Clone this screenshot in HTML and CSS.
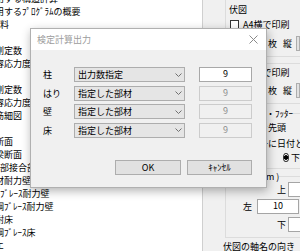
FILE: index.html
```html
<!DOCTYPE html>
<html lang="ja">
<head>
<meta charset="UTF-8">
<title>検定計算出力</title>
<link rel="stylesheet" href="styles.css">
</head>
<body>
<div class="app">
    <div class="tree">
        <div class="tree-list">
            <div class="item">用する構造計算</div>
            <div class="item">用するﾌﾟﾛｸﾞﾗﾑの概要</div>
            <div class="item full">料</div>
            <div class="item"></div>
            <div class="item">剛定数</div>
            <div class="item">容応力度</div>
            <div class="item"></div>
            <div class="item">剛定数</div>
            <div class="item">容応力度</div>
            <div class="item">筋細図</div>
            <div class="item"></div>
            <div class="item">断面</div>
            <div class="item">梁断面</div>
            <div class="item full">部接合部</div>
            <div class="item">材耐力壁</div>
            <div class="item full">ﾌﾞﾚｰｽ耐力壁</div>
            <div class="item">鋼ﾌﾞﾚｰｽ耐力壁</div>
            <div class="item">耐床</div>
            <div class="item">鋼ﾌﾞﾚｰｽ床</div>
            <div class="item">エ</div>
        </div>
    </div>

    <div class="side">
        <div class="grp g1">
            <div class="line cap">伏図</div>
            <div class="line chk-row"><span class="chk"></span><span class="chk-text">A4横で印刷</span></div>
            <div class="line cnt-row"><span>1</span><span class="mai">枚</span><span class="tate">縦</span><span class="spin"></span></div>
        </div>
        <div class="grp g2">
            <div class="line chk-row"><span class="chk"></span><span class="chk-text">A4横で印刷</span></div>
            <div class="line cnt-row"><span>1</span><span class="mai">枚</span><span class="tate">縦</span><span class="spin"></span></div>
        </div>
        <fieldset class="fs g3">
            <legend class="hf">ﾍｯﾀﾞｰ・ﾌｯﾀｰ</legend>
            <div class="line head-row">日時を先頭</div>
            <div class="line date-row">ﾍｯﾀﾞｰに日付と時刻</div>
            <div class="line radio-row"><span class="radio"></span><span>下</span></div>
        </fieldset>
        <fieldset class="fs g4">
            <legend class="mg">余白 ( mm )</legend>
            <div class="mrow top"><span>上</span><span class="box"></span></div>
            <div class="mrow left"><span>左</span><span class="box wide">10</span></div>
            <div class="mrow bottom"><span>下</span><span class="box"></span></div>
        </fieldset>
        <div class="line axis">伏図の軸名の向き</div>
    </div>
</div>

<div class="dialog">
    <div class="dlg-title">
        <span>検定計算出力</span>
        <svg class="dlg-close" width="9" height="9" viewBox="0 0 9 9"><path d="M0.5 0.5 L8.5 8.5 M8.5 0.5 L0.5 8.5" stroke="#8a8a8a" stroke-width="1" fill="none"/></svg>
    </div>
    <div class="dlg-body">
        <div class="out-grid">
            <span class="lbl">柱</span>
            <div class="combo"><span>出力数指定</span><svg width="7" height="4" viewBox="0 0 7 4"><path d="M0.5 0.5 L3.5 3.5 L6.5 0.5" stroke="#707070" fill="none"/></svg></div>
            <div class="num">9</div>

            <span class="lbl">はり</span>
            <div class="combo"><span>指定した部材</span><svg width="7" height="4" viewBox="0 0 7 4"><path d="M0.5 0.5 L3.5 3.5 L6.5 0.5" stroke="#707070" fill="none"/></svg></div>
            <div class="num off">9</div>

            <span class="lbl">壁</span>
            <div class="combo"><span>指定した部材</span><svg width="7" height="4" viewBox="0 0 7 4"><path d="M0.5 0.5 L3.5 3.5 L6.5 0.5" stroke="#707070" fill="none"/></svg></div>
            <div class="num off">9</div>

            <span class="lbl">床</span>
            <div class="combo"><span>指定した部材</span><svg width="7" height="4" viewBox="0 0 7 4"><path d="M0.5 0.5 L3.5 3.5 L6.5 0.5" stroke="#707070" fill="none"/></svg></div>
            <div class="num off">9</div>
        </div>
        <div class="btns">
            <button type="button" class="btn ok">OK</button>
            <button type="button" class="btn cancel">ｷｬﾝｾﾙ</button>
        </div>
    </div>
</div>
</body>
</html>
```

FILE: styles.css
```css
  body {
      margin: 0;
      width: 300px;
      height: 251px;
      overflow: hidden;
      font-family: 'Noto Sans CJK JP', sans-serif;
      font-size: 9px;
      color: #000;
      background: #f0f0f0;
  }
  .app {
      display: flex;
      height: 251px;
  }

  /* tree on the left, scrolled sideways */
  .tree {
      width: 203px;
      flex-shrink: 0;
      background: #fff;
      border-right: 1px solid #cfcfcf;
      box-sizing: border-box;
      overflow: hidden;
  }
  .tree-list {
      margin-top: -8.5px;
      margin-left: -5px;
  }
  .item {
      height: 13px;
      line-height: 13px;
      white-space: nowrap;
  }
  .item.full {
      padding-left: 5px;
  }

  /* settings panel on the right */
  .side {
      flex: 1;
      padding-left: 22px;
      white-space: nowrap;
      overflow: hidden;
  }
  .line {
      height: 13px;
      line-height: 13px;
  }
  .grp {
      border: 1px solid #dcdcdc;
      border-right: none;
      padding-left: 3px;
      box-sizing: border-box;
  }
  .g1 {
      margin-top: -5px;
      height: 62px;
  }
  .g1 .cap {
      margin-top: 7px;
  }
  .g1 .chk-row {
      margin-top: 2px;
  }
  .g2 {
      margin-top: 6px;
      height: 41px;
  }
  .g2 .chk-row {
      margin-top: 1.5px;
  }
  .chk-row {
      display: flex;
      align-items: center;
  }
  .chk {
      width: 9px;
      height: 9px;
      margin-left: 1px;
      border: 1px solid #333;
      background: #fff;
      box-sizing: border-box;
  }
  .chk-text {
      margin-left: 4px;
  }
  .cnt-row {
      display: flex;
      align-items: center;
      margin-top: 5px;
      padding-left: 30px;
  }
  .g1 .cnt-row {
      margin-top: 5.5px;
  }
  .mai {
      margin-left: 4px;
  }
  .tate {
      margin-left: 6px;
  }
  .spin {
      width: 30px;
      height: 15px;
      margin-left: 4px;
      border: 1px solid #adadad;
      background: #e1e1e1;
      box-sizing: border-box;
  }

  .fs {
      margin: 0;
      border: 1px solid #dcdcdc;
      border-right: none;
      padding: 0 0 0 3px;
      min-width: 0;
  }
  .fs legend {
      padding: 0;
      line-height: 13px;
  }
  .g3 {
      margin-top: 2.5px;
      height: 62px;
      box-sizing: border-box;
  }
  .hf {
      margin-left: 14.5px;
  }
  .head-row {
      margin-top: 1px;
      padding-left: 12px;
  }
  .date-row {
      margin-top: 3px;
      padding-left: 16.5px;
  }
  .radio-row {
      margin-top: 1px;
      padding-left: 54px;
      display: flex;
      align-items: center;
      gap: 2px;
  }
  .radio {
      width: 9px;
      height: 9px;
      border: 1px solid #333;
      border-radius: 50%;
      background: radial-gradient(circle, #000 0 2px, #fff 2.5px);
      box-sizing: border-box;
  }
  .g4 {
      margin-top: 3px;
      padding-bottom: 5px;
  }
  .g4 legend {
      line-height: 10px;
      margin-left: 3.5px;
  }
  .mrow {
      display: flex;
      align-items: center;
      height: 15px;
  }
  .mrow + .mrow {
      margin-top: 2.5px;
  }
  .mrow.top, .mrow.bottom {
      padding-left: 48px;
  }
  .mrow.left {
      padding-left: 14px;
  }
  .box {
      height: 15px;
      width: 40px;
      margin-left: 2px;
      border: 1px solid #a5a5a5;
      background: #fff;
      box-sizing: border-box;
      flex-shrink: 0;
  }
  .box.wide {
      width: 42px;
      margin-left: 5px;
      text-align: center;
      line-height: 12px;
  }
  .axis {
      margin-top: 2.5px;
      margin-left: -2px;
  }

  /* the modal dialog, floating over the window */
  .dialog {
      position: absolute;
      left: 30px;
      top: 28px;
      width: 237px;
      border: 1px solid #b0b0b0;
      box-sizing: border-box;
      background: #f0f0f0;
      box-shadow: 1px 3px 9px rgba(0,0,0,0.3);
  }
  .dlg-title {
      height: 21px;
      background: #fff;
      display: flex;
      align-items: center;
      justify-content: space-between;
      padding: 0 8px 0 6px;
      color: #9c9c9c;
  }
  .dlg-close {
      margin-top: -1px;
  }
  .dlg-body {
      padding: 17px 14px 12px 12px;
  }
  .out-grid {
      display: grid;
      grid-template-columns: 31px 125px 53px;
      grid-auto-rows: 15px;
      row-gap: 3.5px;
      align-items: center;
  }
  .combo {
      width: 111px;
      height: 15px;
      border: 1px solid #adadad;
      background: #e5e5e5;
      box-sizing: border-box;
      display: flex;
      align-items: center;
      justify-content: space-between;
      padding: 0 2px 0 3px;
  }
  .num {
      height: 15px;
      border: 1px solid #a8a8a8;
      background: #fff;
      box-sizing: border-box;
      text-align: center;
      line-height: 12px;
  }
  .num.off {
      background: #f0f0f0;
      border-color: #cccccc;
      color: #8d8d8d;
  }
  .btns {
      display: flex;
      justify-content: flex-end;
      gap: 6px;
      margin-top: 22.5px;
  }
  .btn {
      height: 15px;
      padding: 0;
      border: 1px solid #adadad;
      background: #e1e1e1;
      font: inherit;
      color: #000;
      line-height: 12px;
  }
  .btn.ok {
      width: 66px;
  }
  .btn.cancel {
      width: 65px;
  }
```
